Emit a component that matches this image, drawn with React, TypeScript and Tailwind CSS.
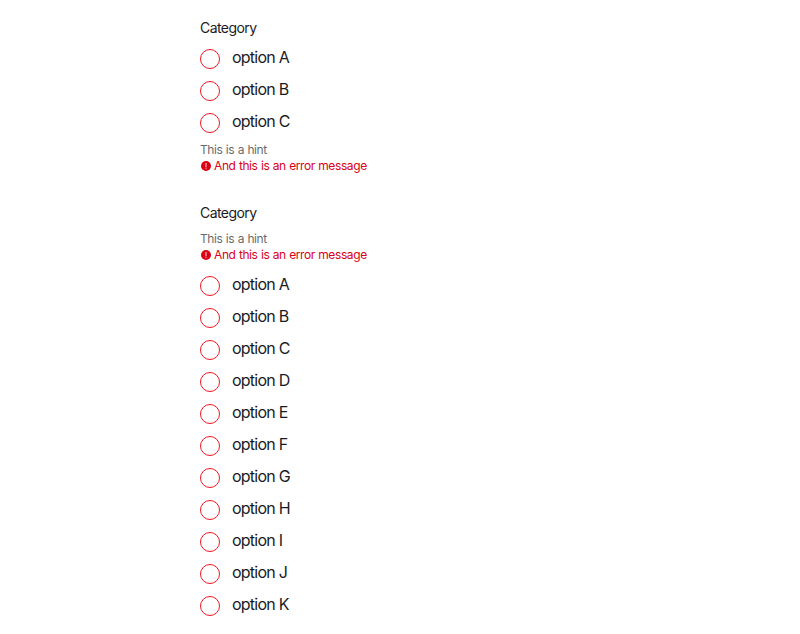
const font = "font-[Inter,'Liberation_Sans',sans-serif]";

function Radio({ label }: { label: string }) {
  return (
    <label className="flex h-8 items-start gap-3">
      <span className="mt-[5px] size-5 rounded-full border border-[#ee1520] bg-white" />
      <span className="pt-px text-[16px] leading-6 tracking-[-0.76px] text-[#1b1b24]">{label}</span>
    </label>
  );
}

function Messages() {
  return (
    <div className="text-[12px] leading-4 tracking-[-0.4px] [word-spacing:0.4px]">
      <p className="text-[#6b6b6b]">This is a hint</p>
      <p className="flex items-center text-[#db0015]">
        <svg className="mr-[3px] ml-px size-[10px]" viewBox="0 0 10 10">
          <circle cx="5" cy="5" r="5" fill="currentColor" />
          <path d="M5 2.6v2.8" stroke="#fff" strokeOpacity=".8" strokeWidth="1.1" strokeLinecap="round" />
          <circle cx="5" cy="7.2" r=".65" fill="#fff" fillOpacity=".8" />
        </svg>
        <span>And this is an error message</span>
      </p>
    </div>
  );
}

function Title() {
  return <h2 className="text-[14px] leading-5 tracking-[-0.56px] text-[#1b1b24]">Category</h2>;
}

export default function App() {
  return (
    <main className={`${font} h-[634px] overflow-hidden bg-white pt-[18px] pl-[200px]`}>
      <section className="h-[185px]">
        <Title />
        <div className="mt-[6px]">
          {["A", "B", "C"].map((x) => <Radio key={x} label={`option ${x}`} />)}
        </div>
        <div className="mt-[2px]"><Messages /></div>
      </section>
      <section>
        <Title />
        <div className="mt-2"><Messages /></div>
        <div className="mt-2">
          {[..."ABCDEFGHIJK"].map((x) => <Radio key={x} label={`option ${x}`} />)}
        </div>
      </section>
    </main>
  );
}
